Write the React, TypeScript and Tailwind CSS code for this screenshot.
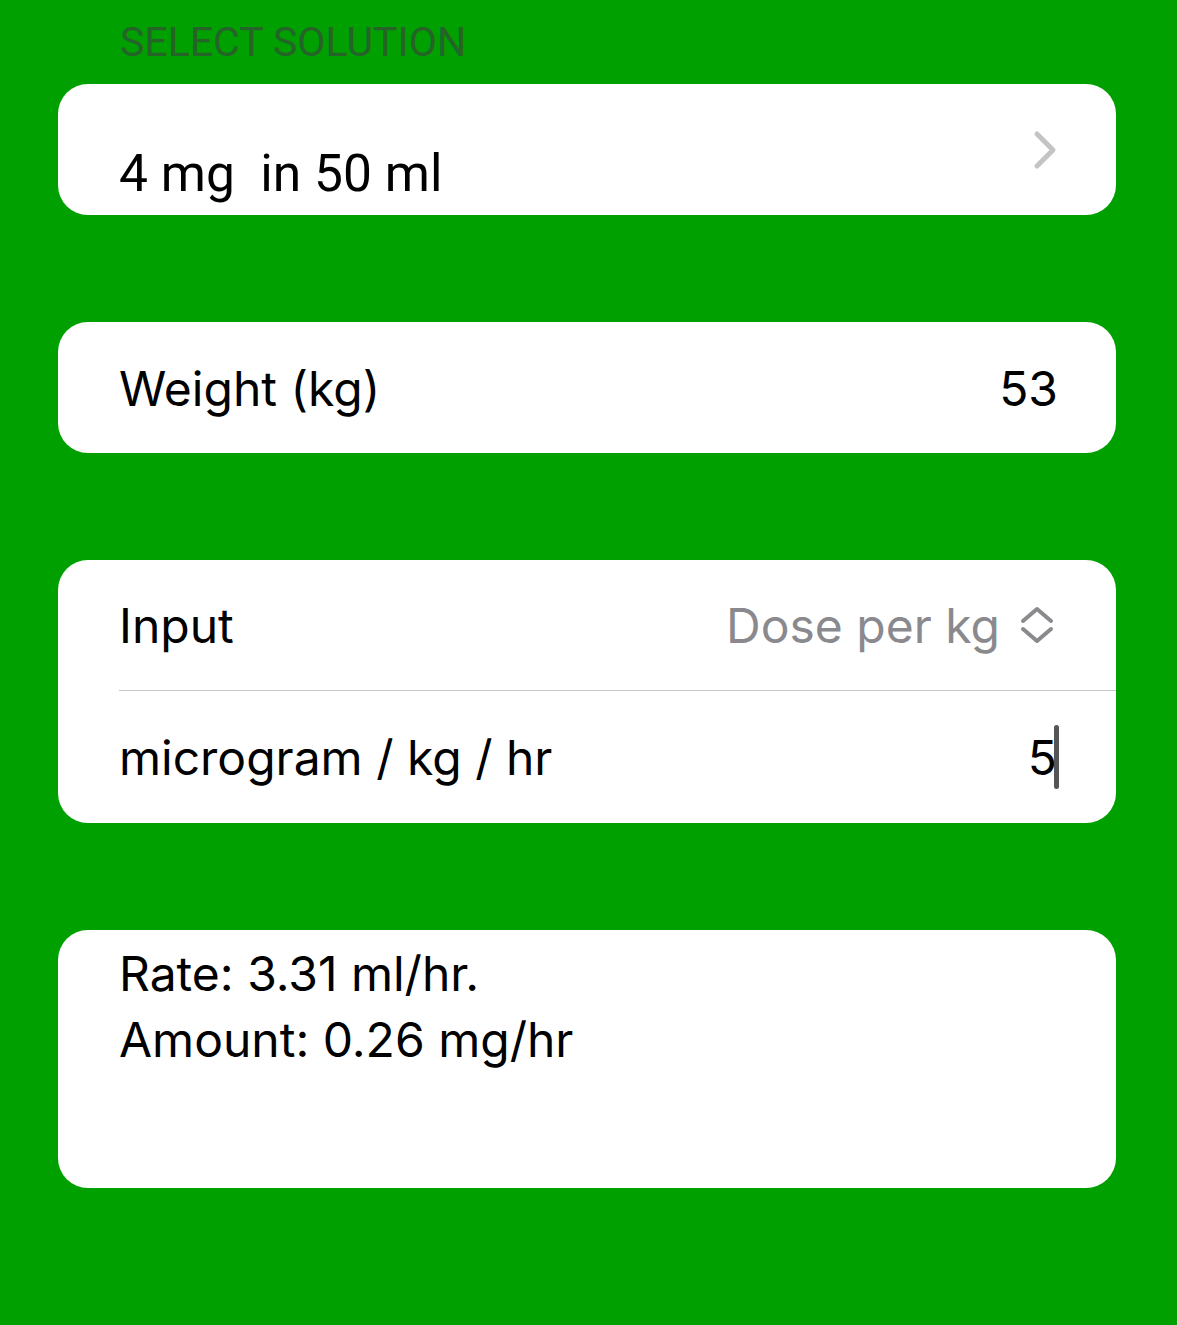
import React from 'react';

const sf = { fontFamily: 'Inter, "Noto Sans", sans-serif' };

const Chevron: React.FC = () => (
  <svg width="26" height="40" viewBox="0 0 26 40" fill="none">
    <path d="M4 4 L20 20 L4 36" stroke="#c4c4c6" strokeWidth="5" strokeLinecap="round" strokeLinejoin="round" />
  </svg>
);

const UpDown: React.FC = () => (
  <svg width="34" height="38" viewBox="0 0 34 38" fill="none">
    <path d="M3 15 L17 3 L31 15" stroke="#8a8a8e" strokeWidth="4" strokeLinecap="round" strokeLinejoin="round" />
    <path d="M3 23 L17 35 L31 23" stroke="#8a8a8e" strokeWidth="4" strokeLinecap="round" strokeLinejoin="round" />
  </svg>
);

export default function App() {
  return (
    <div className="w-full h-[1325px] bg-[#00a000] pl-[58px] pr-[61px] flex flex-col overflow-hidden">
      {/* section header */}
      <div
        className="mt-[22px] mb-[21px] pl-[62px] text-[41px] leading-[41px] text-[#246428]"
        style={{ fontFamily: 'Roboto, "Liberation Sans", sans-serif' }}
      >
        SELECT SOLUTION
      </div>

      {/* solution picker */}
      <div className="h-[131px] bg-white rounded-[30px] flex justify-between pl-[61px] pr-[57px]">
        <div
          className="pt-[64px] text-[51.5px] leading-[52px] text-black whitespace-pre"
          style={{ fontFamily: 'Roboto, "Liberation Sans", sans-serif' }}
        >
          4 mg  in 50 ml
        </div>
        <div className="flex items-center">
          <Chevron />
        </div>
      </div>

      {/* weight */}
      <div
        className="mt-[107px] h-[131px] bg-white rounded-[30px] flex items-center justify-between pl-[61px] pr-[58px] text-[48px] leading-[48px] text-black"
        style={sf}
      >
        <span className="pt-[2px]">Weight (kg)</span>
        <span className="pt-[2px]">53</span>
      </div>

      {/* dose input */}
      <div className="mt-[107px] bg-white rounded-[30px] pl-[61px] text-[48px] leading-[48px]" style={sf}>
        <div className="h-[131px] flex items-center justify-between pr-[62px] border-b border-[#c6c6c8]">
          <span className="text-black pt-[2px]">Input</span>
          <div className="flex items-center gap-[20px] text-[#8a8a8e]">
            <span className="pt-[2px]">Dose per kg</span>
            <UpDown />
          </div>
        </div>
        <div className="h-[132px] flex items-center justify-between pr-[57px]">
          <span className="text-black pt-[2px]">microgram / kg / hr</span>
          <div className="flex items-center">
            <span className="text-black pt-[2px]">5</span>
            <span className="w-[5px] h-[64px] rounded-full bg-[#555558] -ml-[3px]" />
          </div>
        </div>
      </div>

      {/* result */}
      <div
        className="mt-[107px] h-[258px] bg-white rounded-[30px] pl-[61px] pt-[11px] text-[48px] leading-[66px] text-black"
        style={sf}
      >
        <div>Rate: 3.31 ml/hr.</div>
        <div>Amount: 0.26 mg/hr</div>
      </div>
    </div>
  );
}
